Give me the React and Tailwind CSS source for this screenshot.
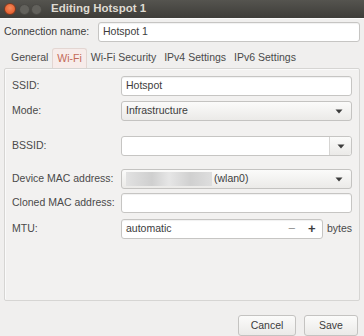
const font = { fontFamily: '"Liberation Sans", "DejaVu Sans", sans-serif' };

function Arrow(){
  return (
    <svg width="8" height="5" viewBox="0 0 8 5" className="shrink-0">
      <path d="M0.5 0.5 L7.5 0.5 L4 4.5 Z" fill="#3c3c3c" />
    </svg>
  );
}

function Entry({children,className=""}){
  return (
    <div className={`h-[20px] flex items-center bg-white border border-[#c6c5c3] rounded-[3px] px-[4px] text-[#3c3c3c] shadow-[inset_0_1px_1px_rgba(0,0,0,0.06)] ${className}`}>
      {children}
    </div>
  );
}

function Combo({children}){
  return (
    <div className="h-[20px] flex items-center bg-gradient-to-b from-[#fbfbfa] to-[#ebeae8] border border-[#c4c3c1] rounded-[3px] pl-[4px] pr-[8px] text-[#3c3c3c]">
      <div className="flex-1 flex items-center">{children}</div>
      <Arrow />
    </div>
  );
}

function Row({label,children,className=""}){
  return (
    <div className={`flex items-center ${className}`}>
      <div className="w-[109px] text-[#4a4a4a]">{label}</div>
      <div className="flex-1">{children}</div>
    </div>
  );
}

export default function App(){
  const tabs=["General","Wi-Fi","Wi-Fi Security","IPv4 Settings","IPv6 Settings"];
  return (
    <div style={font} className="w-[364px] h-[336px] bg-[#f0efee] text-[10.5px] flex flex-col overflow-hidden">
      {/* title bar */}
      <div className="h-[20px] bg-gradient-to-b from-[#55544f] to-[#3e3d39] flex items-center px-[4px]">
        <div className="w-[12px] h-[12px] rounded-full bg-[radial-gradient(circle_at_50%_40%,#f58a5b,#e0501f)] border border-[#7a3a22]" />
        <div className="w-[11px] h-[11px] rounded-full bg-[#62615c] border border-[#4a4945] ml-[3px]" />
        <div className="w-[11px] h-[11px] rounded-full bg-[#62615c] border border-[#4a4945] ml-[1px]" />
        <div className="ml-[9px] text-[#dfdbd2] font-bold text-[11.5px]">Editing Hotspot 1</div>
      </div>
      <div className="h-px bg-[#fafafa]" />
      <div className="flex-1 flex flex-col px-[4px]">
        <div className="flex items-center mt-[3px]">
          <div className="w-[94px] text-[#3c3c3c]">Connection name:</div>
          <Entry className="flex-1">Hotspot 1</Entry>
        </div>
        {/* tabs */}
        <div className="flex items-end h-[22px] mt-[4px] pl-[3px]">
          {tabs.map(t=>(
            t==="Wi-Fi"?
            <div key={t} className="h-[20px] px-[4px] flex items-center bg-[#f7ecea] text-[#c46a58] border border-b-0 border-[#e3d6d2] rounded-t-[3px]">{t}</div>
            :
            <div key={t} className="h-[20px] px-[4px] flex items-center text-[#4a4a4a]">{t}</div>
          ))}
        </div>
        {/* panel */}
        <div className="h-[233px] border border-[#d6d5d3] bg-[#f2f1f0] rounded-[2px] px-[7px] pt-[7px] shadow-[inset_1px_1px_0_#fafafa]">
          <Row label="SSID:"><Entry>Hotspot</Entry></Row>
          <Row label="Mode:" className="mt-[5px]"><Combo>Infrastructure</Combo></Row>
          <Row label="BSSID:" className="mt-[15px]">
            <div className="h-[20px] flex items-center bg-white border border-[#c6c5c3] rounded-[3px]">
              <div className="flex-1" />
              <div className="w-[22px] h-full border-l border-[#d6d5d3] bg-gradient-to-b from-[#fbfbfa] to-[#ebeae8] flex items-center justify-center rounded-r-[3px]"><Arrow /></div>
            </div>
          </Row>
          <Row label="Device MAC address:" className="mt-[13px]">
            <Combo>
              <div className="w-[86px] h-[14px] bg-[linear-gradient(90deg,#e2e2e2,#cfcfcf_30%,#e6e6e6_50%,#d0d0d0_75%,#dedede)] mr-[2px]" />
              <span>(wlan0)</span>
            </Combo>
          </Row>
          <Row label="Cloned MAC address:" className="mt-[4px]"><Entry /></Row>
          <Row label="MTU:" className="mt-[6px]">
            <div className="flex items-center">
              <Entry className="flex-1 pr-0">
                <span className="flex-1">automatic</span>
                <span className="w-[20px] text-center text-[#9a9a9a] text-[13px]">−</span>
                <span className="w-[20px] text-center text-[#3c3c3c] text-[13px] font-bold">+</span>
              </Entry>
              <span className="ml-[4px] text-[#4a4a4a]">bytes</span>
            </div>
          </Row>
        </div>
        {/* buttons */}
        <div className="flex justify-end gap-[8px] mt-[14px] pr-[2px]">
          <div className="w-[58px] h-[21px] flex items-center justify-center bg-gradient-to-b from-[#fbfbfa] to-[#ebeae8] border border-[#c4c3c1] rounded-[3px] text-[#3c3c3c]">Cancel</div>
          <div className="w-[54px] h-[21px] flex items-center justify-center bg-gradient-to-b from-[#fbfbfa] to-[#ebeae8] border border-[#c4c3c1] rounded-[3px] text-[#3c3c3c]">Save</div>
        </div>
      </div>
    </div>
  );
}
